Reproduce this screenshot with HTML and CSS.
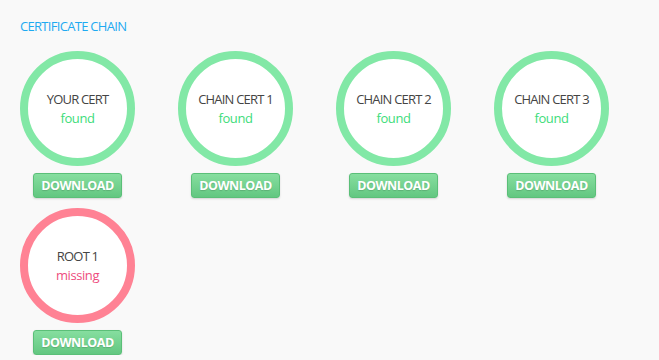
FILE: index.html
```html
<!DOCTYPE html>
<html lang="en">
<head>
  <meta charset="UTF-8" />
  <title>Certificate Chain</title>
  <link rel="stylesheet" href="styles.css">
</head>
<body>
  <div class="chain">
    <h3 class="chain-title">CERTIFICATE CHAIN</h3>

    <div class="cert-grid">
      <div class="cert">
        <div class="cert-ring found">
          <div class="cert-name">YOUR CERT</div>
          <div class="cert-status">found</div>
        </div>
        <button class="btn-download">DOWNLOAD</button>
      </div>
      <div class="cert">
        <div class="cert-ring found">
          <div class="cert-name">CHAIN CERT 1</div>
          <div class="cert-status">found</div>
        </div>
        <button class="btn-download">DOWNLOAD</button>
      </div>
      <div class="cert">
        <div class="cert-ring found">
          <div class="cert-name">CHAIN CERT 2</div>
          <div class="cert-status">found</div>
        </div>
        <button class="btn-download">DOWNLOAD</button>
      </div>
      <div class="cert">
        <div class="cert-ring found">
          <div class="cert-name">CHAIN CERT 3</div>
          <div class="cert-status">found</div>
        </div>
        <button class="btn-download">DOWNLOAD</button>
      </div>
      <div class="cert">
        <div class="cert-ring missing">
          <div class="cert-name">ROOT 1</div>
          <div class="cert-status">missing</div>
        </div>
        <button class="btn-download">DOWNLOAD</button>
      </div>
    </div>
  </div>
</body>
</html>
```

FILE: styles.css
```css
body {
  margin: 0;
  background: #f9f9f9;
  font-family: "Open Sans", Arial, sans-serif;
  color: #444;
}
.chain {
  padding: 17px 20px 0 20px;
}
.chain-title {
  margin: 0;
  font-size: 13px;
  font-weight: normal;
  color: #1eaaf1;
  letter-spacing: -0.7px;
  line-height: 18px;
}
.cert-grid {
  display: grid;
  grid-template-columns: repeat(4, 115px);
  column-gap: 43px;
  row-gap: 10px;
  margin-top: 16px;
}
.cert {
  display: flex;
  flex-direction: column;
  align-items: center;
}
.cert-ring {
  box-sizing: border-box;
  width: 115px;
  height: 115px;
  border-radius: 50%;
  border: 8px solid #82e8a6;
  background: #fff;
  display: flex;
  flex-direction: column;
  align-items: center;
  justify-content: center;
  gap: 1px;
}
.cert-ring.missing {
  border-color: #ff8294;
}
.cert-name {
  font-size: 13px;
  letter-spacing: -0.8px;
  line-height: 18px;
  color: #444;
}
.cert-status {
  font-size: 13px;
  letter-spacing: -0.4px;
  line-height: 18px;
  color: #3ddc7a;
}
.missing .cert-status {
  color: #ee4c7e;
}
.btn-download {
  margin-top: 7px;
  width: 89px;
  height: 25px;
  padding: 0;
  border: 1px solid #5bbf78;
  border-radius: 3px;
  background: linear-gradient(#86de9f, #63c781);
  color: #fff;
  font-family: "Open Sans", Arial, sans-serif;
  font-weight: bold;
  font-size: 12.5px;
  letter-spacing: -0.5px;
  text-shadow: 0 1px 1px rgba(0, 0, 0, 0.15);
  box-shadow: 0 1px 2px rgba(0, 0, 0, 0.15);
}
```
